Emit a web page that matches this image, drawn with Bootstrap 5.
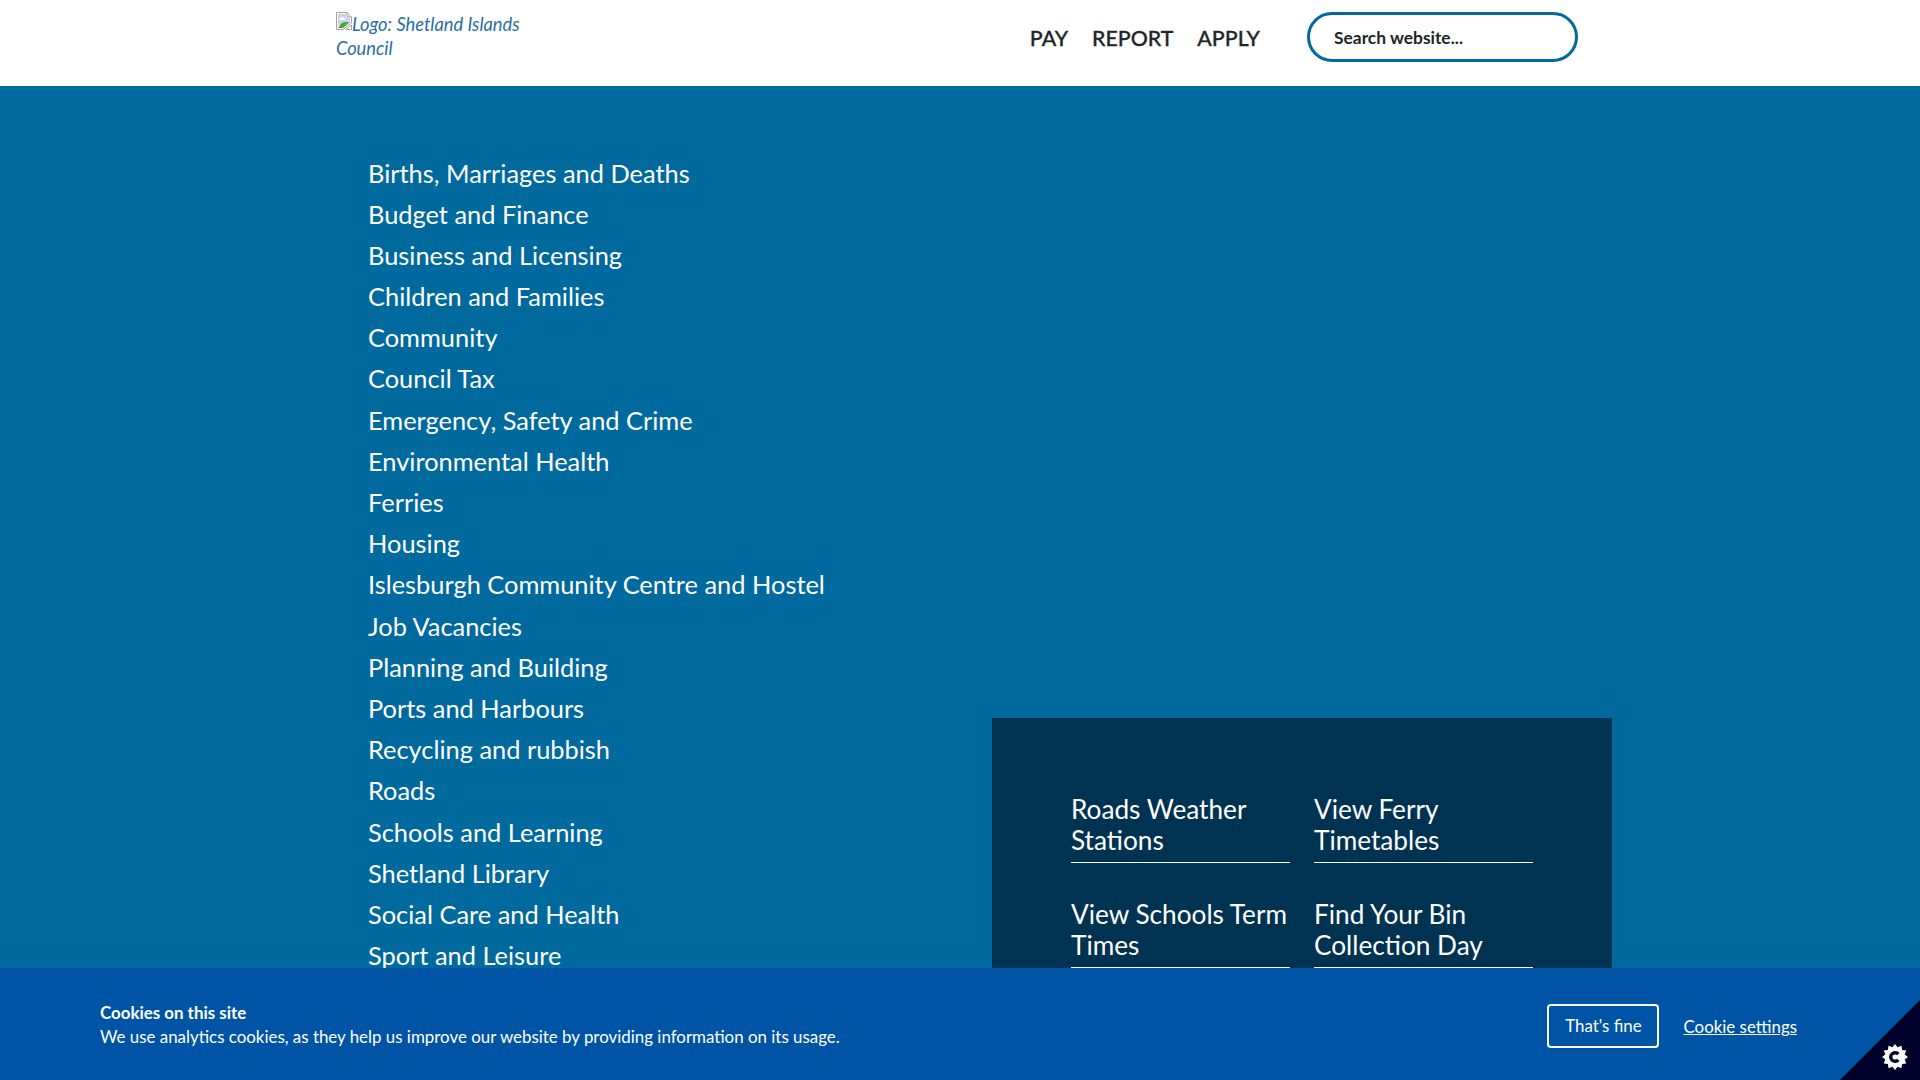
<!DOCTYPE html>
<html lang="en">
<head>
<meta charset="utf-8">
<title>Shetland Islands Council</title>
<link href="https://cdn.jsdelivr.net/npm/bootstrap@5.3.0/dist/css/bootstrap.min.css" rel="stylesheet">
<style>
html,body{height:100vh;overflow:hidden}
body{font-family:"Lato","Liberation Sans",sans-serif;color:#212529;background:#00699e}
.site-head{height:86px;background:#fff}
.head-inner{width:1284px;margin-left:336px;height:86px}
.logo-link{display:block;width:200px;margin-top:12px;font-style:italic;font-size:18.3px;line-height:24px;color:#2a6ea8;text-decoration:none}
.broken-img{display:inline-block;width:16px;height:18px;vertical-align:1px}
.top-nav{margin-left:auto;gap:24px;margin-top:25px;height:26px}
.top-nav a{font-size:21.3px;line-height:26px;font-weight:500;color:#212529;text-decoration:none;-webkit-text-stroke:.3px #212529}
.search-box{width:271px;height:50px;margin:12px 42px 0 47px;border:3px solid #00699e;border-radius:25px;padding:0 24px;font-size:17.4px;font-weight:700;line-height:40px;color:#212529;background:#fff;outline:none}
.search-box::placeholder{color:#212529;opacity:1}
.hero{padding:0 0 0 368px}
.topic-list{width:624px;padding:66.5px 0 0;list-style:none;margin:0}
.topic-list li{height:41.2px;line-height:41.2px;font-size:25.4px;white-space:nowrap}
.topic-list a,.quick-link{color:#fff;text-decoration:none}
.quick-panel{width:620px;height:320px;margin-top:632px;background:#003352;padding:76px 79px 0;column-gap:24px;display:grid;grid-template-columns:219px 219px;grid-auto-rows:105px}
.quick-link{display:block;height:68px;font-size:26.2px;line-height:31px;border-bottom:1px solid #fff;box-sizing:content-box}
.cookie-bar{position:fixed;left:0;right:0;bottom:0;height:112px;background:#0054a6;color:#fff;padding:33px 100px 0;font-size:16.9px}
.cookie-title{font-weight:700;line-height:24px}
.cookie-text{line-height:24px}
.cookie-btn{width:112px;height:44px;border:2px solid #fff;border-radius:4px;color:#fff;font-size:16.9px;line-height:40px;padding:0;background:transparent;margin-top:3px}
.cookie-link{color:#fff;font-size:16.9px;margin:13px 23px 0 24px}
.cookie-corner{position:fixed;right:0;bottom:0;width:80px;height:80px;background:#00002b;clip-path:polygon(100% 0,100% 100%,0 100%)}
.cookie-gear{position:absolute;left:42px;top:44px;width:26px;height:26px}
</style>
</head>
<body>
<header class="site-head">
  <div class="head-inner d-flex align-items-start">
    <a class="logo-link" href="#"><svg class="broken-img" viewBox="0 0 16 18" aria-hidden="true"><path d="M.5.5h10.5l4.5 4.5v6L11 14.500 7 17.500H.5z" fill="#fff" stroke="#a3a3a3"/><path d="M2 2h8v4h4v5l-3 2.500H2z" fill="#c5d5ee"/><path d="M4 6.500c.8-1.800 3.500-1.800 4.500 0 1 .2 1 1.500 0 1.500h-4.500c-1 0-1-1.500 0-1.500z" fill="#fff"/><path d="M2 16l3-4c2-2 5-2.500 8-1.500L7 16z" fill="#4ea52f"/><path d="M11 .5v4.500h4.500" fill="#e4e4e4" stroke="#a3a3a3"/><path d="M15.500 13v4.500H10z" fill="#fff" stroke="#a3a3a3"/></svg>Logo: Shetland Islands Council</a>
    <nav class="top-nav d-flex">
      <a href="#">PAY</a><a href="#">REPORT</a><a href="#">APPLY</a>
    </nav>
    <input class="search-box" type="text" placeholder="Search website...">
  </div>
</header>
<main class="hero d-flex align-items-start">
  <ul class="topic-list">
    <li><a href="#">Births, Marriages and Deaths</a></li>
    <li><a href="#">Budget and Finance</a></li>
    <li><a href="#">Business and Licensing</a></li>
    <li><a href="#">Children and Families</a></li>
    <li><a href="#">Community</a></li>
    <li><a href="#">Council Tax</a></li>
    <li><a href="#">Emergency, Safety and Crime</a></li>
    <li><a href="#">Environmental Health</a></li>
    <li><a href="#">Ferries</a></li>
    <li><a href="#">Housing</a></li>
    <li><a href="#">Islesburgh Community Centre and Hostel</a></li>
    <li><a href="#">Job Vacancies</a></li>
    <li><a href="#">Planning and Building</a></li>
    <li><a href="#">Ports and Harbours</a></li>
    <li><a href="#">Recycling and rubbish</a></li>
    <li><a href="#">Roads</a></li>
    <li><a href="#">Schools and Learning</a></li>
    <li><a href="#">Shetland Library</a></li>
    <li><a href="#">Social Care and Health</a></li>
    <li><a href="#">Sport and Leisure</a></li>
  </ul>
  <aside class="quick-panel">
    <a class="quick-link" href="#">Roads Weather Stations</a>
    <a class="quick-link" href="#">View Ferry Timetables</a>
    <a class="quick-link" href="#">View Schools Term Times</a>
    <a class="quick-link" href="#">Find Your Bin Collection Day</a>
  </aside>
</main>
<section class="cookie-bar d-flex">
  <div class="flex-grow-1">
    <div class="cookie-title">Cookies on this site</div>
    <div class="cookie-text">We use analytics cookies, as they help us improve our website by providing information on its usage.</div>
  </div>
  <button class="cookie-btn" type="button">That's fine</button>
  <a class="cookie-link" href="#">Cookie settings</a>
</section>
<div class="cookie-corner">
  <svg class="cookie-gear" viewBox="0 0 26 26" aria-hidden="true"><polygon fill="#fff" points="13,0 15.59,3.34 19.5,1.74 20.07,5.93 24.26,6.5 22.66,10.41 26,13 22.66,15.59 24.26,19.5 20.07,20.07 19.5,24.26 15.59,22.66 13,26 10.41,22.66 6.5,24.26 5.93,20.07 1.74,19.5 3.34,15.59 0,13 3.34,10.41 1.74,6.5 5.93,5.93 6.5,1.74 10.41,3.34"/><path d="M16.3 10.2A4.300 4.300 0 1 0 16.300 15.800" fill="none" stroke="#00002b" stroke-width="3.400"/></svg>
</div>
</body>
</html>
